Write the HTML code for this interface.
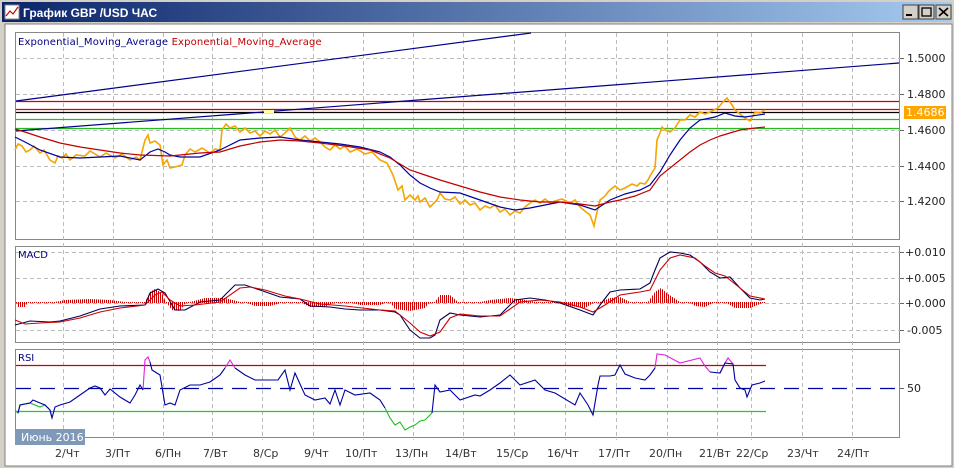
<!DOCTYPE html>
<html><head><meta charset="utf-8"><style>
html,body{margin:0;padding:0;width:954px;height:468px;overflow:hidden;background:#d4d0c8}
svg{display:block}
text{font-family:"DejaVu Sans","Liberation Sans",sans-serif}
</style></head><body>
<svg width="954" height="468" viewBox="0 0 954 468" xmlns="http://www.w3.org/2000/svg">
<defs>
<linearGradient id="tb" x1="0" x2="1"><stop offset="0" stop-color="#0a246a"/><stop offset="1" stop-color="#a6caf0"/></linearGradient>
<pattern id="hs" width="2" height="4" patternUnits="userSpaceOnUse"><rect width="1" height="4" fill="#cc0000"/></pattern>
</defs>
<rect x="0" y="0" width="954" height="468" fill="#d4d0c8"/>
<rect x="2" y="2" width="950" height="20" fill="url(#tb)"/>
<rect x="5" y="5" width="14" height="14" fill="#fff" stroke="#888"/>
<polyline points="6,16 10,11 13,14 18,7" fill="none" stroke="#c00" stroke-width="1.2"/>
<text x="23" y="17" font-size="12" font-weight="bold" fill="#fff" style="font-family:'Liberation Sans',sans-serif">График GBP /USD  ЧАС</text>
<g fill="#d4d0c8" stroke="#404040"><rect x="903" y="5" width="15" height="14"/><rect x="919" y="5" width="15" height="14"/><rect x="936" y="5" width="15" height="14"/></g>
<rect x="906" y="14" width="6" height="2" fill="#000"/>
<rect x="922" y="8" width="9" height="8" fill="none" stroke="#000" stroke-width="1.3"/>
<path d="M939 8 L948 16 M948 8 L939 16" stroke="#000" stroke-width="1.6"/>
<rect x="5" y="24" width="947" height="442" fill="#fff" stroke="#808080"/>
<g fill="none" stroke="#888"><rect x="15.5" y="32.5" width="884" height="207"/><rect x="15.5" y="246.5" width="884" height="96"/><rect x="15.5" y="349.5" width="884" height="88"/></g>
<g stroke="#bbb" stroke-dasharray="4,3" fill="none">
<path d="M63.5 33V440M113.5 33V440M163.5 33V440M212.5 33V440M262.5 33V440M313.5 33V440M363.5 33V440M413.5 33V440M463.5 33V440M514.5 33V440M565.5 33V440M616.5 33V440M667.5 33V440M717.5 33V440M751.5 33V440M802.5 33V440M852.5 33V440"/>
<path d="M16 58.5H905M16 94.5H905M16 130.5H905M16 166.5H905M16 201.5H905M16 252.5H905M16 278.5H905M16 303.5H905M16 330.5H905"/>
</g>
<g font-size="11" fill="#222">
<text x="907" y="62">1.5000</text><text x="907" y="98">1.4800</text><text x="907" y="134">1.4600</text><text x="907" y="170">1.4400</text><text x="907" y="205">1.4200</text>
<text x="905" y="256">+0.010</text><text x="905" y="282">+0.005</text><text x="905" y="307">+0.000</text><text x="907" y="334">-0.005</text>
<text x="907" y="392">50</text>
</g>
<rect x="904" y="106" width="42" height="13" fill="#ffa500"/>
<text x="906" y="116" font-size="11" fill="#fff">1.4686</text>
<g stroke="#666" fill="none"><path d="M900 58.5h4M900 94.5h4M900 130.5h4M900 166.5h4M900 201.5h4M900 252.5h4M900 278.5h4M900 303.5h4M900 330.5h4M900 388.5h4"/></g>
<text x="18" y="45" font-size="10" fill="#000080" letter-spacing="0.15">Exponential_Moving_Average <tspan fill="#c00000">Exponential_Moving_Average</tspan></text>
<g stroke-width="1.2" fill="none">
<path d="M16 101.5H899M16 109.5H899" stroke="#d00000"/>
<path d="M16 112.5H899" stroke="#000"/>
<path d="M16 119.5H899M16 128.5H899" stroke="#22bb22"/>
<path d="M16 101 L531 33" stroke="#00008b"/>
<path d="M16 131 L899 63" stroke="#00008b"/>
<rect x="264" y="110" width="10" height="3" fill="#ffff99" stroke="none"/>
<polyline stroke="#f5a500" stroke-width="1.6" points="15,150 18,144 22,146 26,152 30,150 34,146 40,153 44,150 50,160 55,163 58,156 62,158 66,154 70,160 76,155 85,156 90,151 100,157 106,153 115,158 122,154 130,160 136,157 140,160 145,140 148,135 150,143 155,141 160,145 163,165 167,160 170,168 175,167 182,165 185,155 190,149 195,152 202,148 210,153 215,149 220,150 222,130 226,124 230,128 235,126 240,132 245,128 250,133 255,131 260,136 265,131 270,134 275,130 280,137 285,133 290,128 295,137 300,140 305,136 310,141 315,138 320,142 325,147 330,150 335,145 340,149 345,146 350,152 357,149 365,154 372,152 380,160 387,163 393,175 398,190 402,186 405,200 410,195 415,200 418,196 420,202 425,198 430,207 437,200 440,193 445,199 450,200 455,197 460,204 465,200 470,205 475,203 480,210 485,206 490,208 495,205 500,212 505,209 510,215 515,211 520,213 525,207 530,203 535,200 540,203 545,199 550,203 555,201 562,199 570,203 575,200 580,207 586,212 590,215 594,226 597,212 600,200 605,196 608,192 610,190 615,186 620,190 625,188 632,184 637,186 640,183 645,184 648,180 650,176 655,168 657,140 660,133 662,127 665,130 670,132 675,128 678,123 680,120 685,120 690,115 695,117 700,112 705,114 710,112 718,108 722,103 727,98 732,105 735,110 740,114 745,118 750,121 755,112 760,113 765,110"/>
<polyline stroke="#0000a0" points="15,137 25,142 40,150 60,157 80,158 100,157 120,156 140,160 150,152 158,149 165,152 170,155 180,157 200,157 220,150 240,140 260,138 280,137 300,140 320,142 340,144 360,147 380,152 390,157 400,165 410,175 420,183 430,188 440,192 460,193 480,200 500,207 515,210 530,208 540,206 560,202 580,205 595,210 610,200 625,194 640,190 650,185 660,172 670,155 680,140 690,128 700,120 715,117 725,113 735,116 745,117 765,114"/>
<polyline stroke="#c00000" points="15,129 25,132 40,137 60,143 80,147 100,150 120,153 140,155 170,156 200,153 220,152 240,146 260,142 280,140 300,141 320,143 345,146 370,150 390,158 410,170 425,175 440,180 460,186 480,192 500,197 520,200 540,202 560,202 580,204 595,206 610,202 620,200 635,196 650,190 660,176 670,168 680,160 690,152 700,145 710,140 720,136 730,133 740,130 755,128 765,127"/>
</g>
<text x="18" y="258" font-size="10" fill="#000080">MACD</text>
<path d="M16 302.5H766" stroke="#cc0000" stroke-dasharray="1,1" fill="none"/>
<g fill="url(#hs)">
<polygon points="16,302 18,307 25,307 28,302"/>
<polygon points="55,302 65,300 90,299 110,300 125,302"/>
<polygon points="145,302 150,292 155,289 162,293 166,302"/>
<polygon points="166,302 172,310 180,311 186,302"/>
<polygon points="190,302 205,298 225,298 240,302"/>
<polygon points="245,302 255,306 270,306 285,302"/>
<polygon points="300,302 310,307 325,307 335,302"/>
<polygon points="350,302 360,305 380,305 388,302"/>
<polygon points="390,302 395,309 410,311 425,308 430,302"/>
<polygon points="435,302 440,295 450,295 458,302"/>
<polygon points="480,302 490,300 510,298 525,300 535,302"/>
<polygon points="555,302 570,306 585,308 595,302"/>
<polygon points="600,302 610,298 620,297 630,302"/>
<polygon points="648,302 655,292 661,288 668,294 680,302"/>
<polygon points="690,302 695,306 705,307 715,302"/>
<polygon points="725,302 735,308 750,308 765,302"/>
</g>
<g fill="none" stroke-width="1.1">
<polyline stroke="#000050" points="15,325 30,321 50,322 60,321 80,316 100,309 120,306 145,305 150,293 158,289 165,293 175,310 185,310 200,302 220,300 235,285 245,285 260,290 280,297 300,299 310,306 330,307 345,309 360,310 380,310 395,312 400,315 410,330 420,338 430,338 435,335 440,320 450,313 460,315 480,317 500,315 515,300 530,298 545,300 560,303 580,310 593,315 600,305 610,292 620,290 640,289 650,283 655,270 660,258 670,252 680,253 690,255 700,262 710,272 720,278 730,277 740,288 750,298 760,300 765,299"/>
<polyline stroke="#cc0000" points="15,320 25,324 40,323 60,322 80,318 100,312 120,308 145,305 155,295 162,292 170,300 180,306 195,305 220,302 240,288 250,287 265,290 285,296 300,299 320,304 345,306 380,310 395,311 410,323 420,332 430,336 440,332 450,318 460,314 480,316 500,316 520,302 540,300 560,302 580,307 593,312 605,305 620,295 640,292 650,290 660,270 670,258 680,255 695,258 705,266 715,273 725,276 735,284 750,296 765,299"/>
</g>
<text x="18" y="361" font-size="10" fill="#000080">RSI</text>
<path d="M16 365.5H766" stroke="#cc0000" stroke-width="1.2"/>
<path d="M16 411.5H766" stroke="#22cc22" stroke-width="1.2"/>
<path d="M16 388.5H899" stroke="#0000a0" stroke-width="1.3" stroke-dasharray="15,9"/>
<g fill="none" stroke-width="1.1">
<polyline stroke="#22bb22" points="15,410 18,413 20,405 30,403 40,407 45,405 50,410 52,418"/>
<polyline stroke="#22bb22" points="385,408 390,418 395,425 400,422 405,430 410,427 415,425 420,421 425,420 432,413"/>
<polyline stroke="#dd22dd" points="143,390 145,360 148,357 150,362"/>
<polyline stroke="#dd22dd" points="225,368 230,360 235,368"/>
<polyline stroke="#dd22dd" points="655,368 657,354 665,355 680,363 700,358 705,366 710,372"/>
<polyline stroke="#dd22dd" points="720,373 725,363 728,358 733,364"/>
<polyline stroke="#0000a0" points="18,413 20,405 30,403 33,400 40,403 45,405 50,410 52,418 55,407 60,405 70,402 80,395 90,388 95,386 100,388 105,395 110,389 120,397 130,403 135,395 140,385 143,390"/>
<polyline stroke="#0000a0" points="150,362 152,370 160,375 165,405 170,403 175,405 180,390 190,385 200,385 210,382 220,375 225,368"/>
<polyline stroke="#0000a0" points="235,368 245,375 255,380 270,380 278,380 285,370 290,390 295,373 305,395 315,400 325,398 330,404 335,390 340,405 345,390 355,395 370,393 380,400 385,408"/>
<polyline stroke="#0000a0" points="432,413 435,385 440,392 450,390 460,400 475,395 480,396 490,390 500,383 510,375 520,385 535,380 545,390 555,393 575,405 580,393 588,405 593,415 598,385 600,376 610,376 615,375 620,365 625,374 635,378 645,380 650,375 655,368"/>
<polyline stroke="#0000a0" points="710,372 720,373 725,363 733,364 735,380 740,388 745,390 747,397 752,385 760,383 765,381"/>
</g>
<rect x="15" y="429" width="70" height="16" fill="#7f9ab8"/>
<text x="21" y="441" font-size="11" fill="#fff">Июнь 2016</text>
<g font-size="11" fill="#333">
<text x="55" y="457">2/Чт</text><text x="105" y="457">3/Пт</text><text x="155" y="457">6/Пн</text><text x="203" y="457">7/Вт</text><text x="253" y="457">8/Ср</text><text x="304" y="457">9/Чт</text><text x="345" y="457">10/Пт</text><text x="395" y="457">13/Пн</text><text x="445" y="457">14/Вт</text><text x="496" y="457">15/Ср</text><text x="547" y="457">16/Чт</text><text x="598" y="457">17/Пт</text><text x="649" y="457">20/Пн</text><text x="699" y="457">21/Вт</text><text x="736" y="457">22/Ср</text><text x="787" y="457">23/Чт</text><text x="837" y="457">24/Пт</text>
</g>
</svg>
</body></html>
